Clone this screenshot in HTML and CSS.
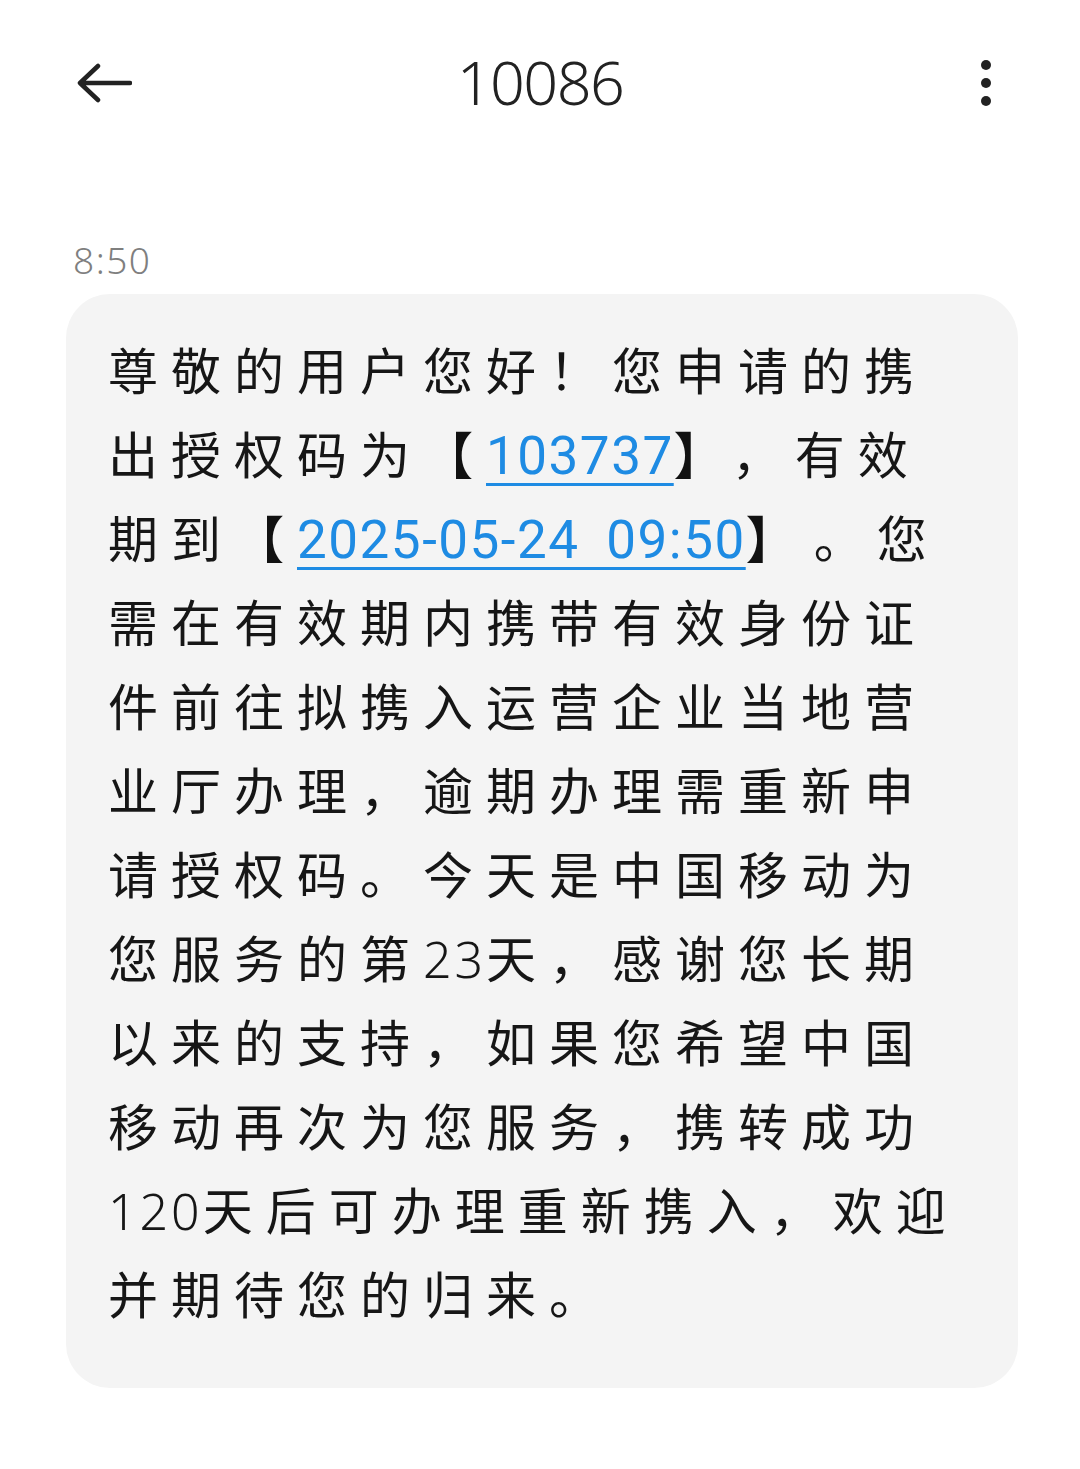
FILE: index.html
```html
<!DOCTYPE html>
<html lang="zh">
<head>
<meta charset="utf-8">
<link rel="stylesheet" href="styles.css">
</head>
<body>
<div class="page">
  <header class="topbar">
    <svg class="back" width="56" height="40" viewBox="0 0 56 40">
      <path d="M54 20 H5 M22 3 L4 20 L22 37" fill="none" stroke="#222" stroke-width="4.5" stroke-linecap="round" stroke-linejoin="round"/>
    </svg>
    <div class="title">10086</div>
    <svg class="more" width="14" height="48" viewBox="0 0 14 48">
      <circle cx="7" cy="6" r="5" fill="#222"/>
      <circle cx="7" cy="24" r="5" fill="#222"/>
      <circle cx="7" cy="42" r="5" fill="#222"/>
    </svg>
  </header>
  <div class="time">8:50</div>
  <div class="bubble">
    <div class="line">尊敬的用户您好！您申请的携</div>
    <div class="line">出授权码为<span class="br">【</span><span class="link">103737</span><span class="br close">】</span>，有效</div>
    <div class="line">期到<span class="br">【</span><span class="link">2025-05-24 09:50</span><span class="br close wide">】</span>。您</div>
    <div class="line">需在有效期内携带有效身份证</div>
    <div class="line">件前往拟携入运营企业当地营</div>
    <div class="line">业厅办理，逾期办理需重新申</div>
    <div class="line">请授权码。今天是中国移动为</div>
    <div class="line">您服务的第<span class="num">23</span>天，感谢您长期</div>
    <div class="line">以来的支持，如果您希望中国</div>
    <div class="line">移动再次为您服务，携转成功</div>
    <div class="line"><span class="num">120</span>天后可办理重新携入，欢迎</div>
    <div class="line">并期待您的归来。</div>
  </div>
</div>
</body>
</html>
```

FILE: styles.css
```css
html, body {
  margin: 0;
  padding: 0;
  background: #ffffff;
}
.page {
  width: 1080px;
  height: 1469px;
  font-family: "Noto Sans CJK SC", "Noto Sans", sans-serif;
  color: #161616;
}
.topbar {
  height: 166px;
  display: flex;
  align-items: center;
  justify-content: space-between;
  padding: 0 87px 0 76px;
  box-sizing: border-box;
  position: relative;
}
.back {
  display: block;
}
.title {
  position: absolute;
  left: 0;
  right: 0;
  top: 40px;
  text-align: center;
  font-family: "Noto Sans", sans-serif;
  font-weight: 300;
  font-size: 61px;
  line-height: 84px;
  color: #222;
  letter-spacing: -1.5px;
  pointer-events: none;
}
.more {
  display: block;
}
.time {
  margin: 70px 0 0 73px;
  font-family: "Noto Sans", sans-serif;
  font-weight: 300;
  font-size: 37px;
  line-height: 48px;
  letter-spacing: 1.5px;
  color: #7f7f7f;
}
.bubble {
  margin: 10px 62px 0 66px;
  background: #f4f4f4;
  border-radius: 44px;
  padding: 32px 30px 54px 42px;
}
.line {
  font-size: 50px;
  line-height: 84px;
  height: 84px;
  letter-spacing: 13px;
  white-space: nowrap;
}
.br {
  font-weight: 700;
  color: #111;
}
.close {
  margin-right: 20px;
}
.close.wide {
  margin-right: 30px;
}
.link {
  font-family: "Roboto", "Noto Sans", sans-serif;
  font-size: 53px;
  letter-spacing: 1.5px;
  word-spacing: 12px;
  color: #1e8be3;
  text-decoration: underline;
  text-decoration-thickness: 3px;
  text-underline-offset: 9px;
}
.num {
  font-family: "Noto Sans", sans-serif;
  font-weight: 300;
  letter-spacing: 3px;
}
```
